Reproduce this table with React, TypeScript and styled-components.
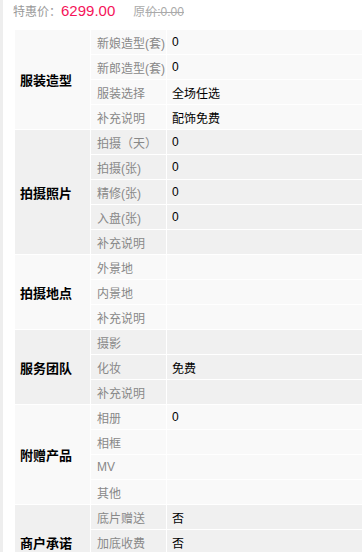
import styled, { createGlobalStyle } from "styled-components";

type Item = { label: string; value?: string };
type Group = { title: string; items: Item[] };

const groups: Group[] = [
  {
    title: "服装造型",
    items: [
      { label: "新娘造型(套)", value: "0" },
      { label: "新郎造型(套)", value: "0" },
      { label: "服装选择", value: "全场任选" },
      { label: "补充说明", value: "配饰免费" },
    ],
  },
  {
    title: "拍摄照片",
    items: [
      { label: "拍摄（天）", value: "0" },
      { label: "拍摄(张)", value: "0" },
      { label: "精修(张)", value: "0" },
      { label: "入盘(张)", value: "0" },
      { label: "补充说明" },
    ],
  },
  {
    title: "拍摄地点",
    items: [{ label: "外景地" }, { label: "内景地" }, { label: "补充说明" }],
  },
  {
    title: "服务团队",
    items: [{ label: "摄影" }, { label: "化妆", value: "免费" }, { label: "补充说明" }],
  },
  {
    title: "附赠产品",
    items: [{ label: "相册", value: "0" }, { label: "相框" }, { label: "MV" }, { label: "其他" }],
  },
  {
    title: "商户承诺",
    items: [
      { label: "底片赠送", value: "否" },
      { label: "加底收费", value: "否" },
      { label: "补充说明" },
    ],
  },
];

export default function App() {
  return (
    <>
      <GlobalStyle />
      <Page>
        <PriceBar>
          <PriceLabel>特惠价：</PriceLabel>
          <Price>6299.00</Price>
          <OldPrice>
            原<del>价:0.00</del>
          </OldPrice>
        </PriceBar>
        <Table>
          <tbody>
            {groups.map((g, gi) =>
              g.items.map((item, i) => (
                <Row key={`${gi}-${i}`} $alt={gi % 2 === 1}>
                  {i === 0 && <GroupCell rowSpan={g.items.length}>{g.title}</GroupCell>}
                  <LabelCell>{item.label}</LabelCell>
                  <ValueCell>{item.value ?? ""}</ValueCell>
                </Row>
              ))
            )}
          </tbody>
        </Table>
      </Page>
    </>
  );
}

const GlobalStyle = createGlobalStyle`
  body {
    margin: 0;
    background: #fff;
    font-family: "Liberation Sans", Arial, "Noto Sans CJK SC", sans-serif;
  }
`;

const Page = styled.div`
  border-left: 3px solid #eeeeee;
  padding-left: 12px;
  height: 552px;
  box-sizing: border-box;
  overflow: hidden;
`;

const PriceBar = styled.div`
  height: 29px;
  display: flex;
  align-items: center;
  padding-bottom: 8px;
  box-sizing: border-box;
  margin-left: -2px;
`;

const PriceLabel = styled.span`
  font-size: 12px;
  color: #999;
`;

const Price = styled.span`
  font-size: 15px;
  color: #f5145a;
  margin-right: 18px;
`;

const OldPrice = styled.span`
  font-size: 12px;
  color: #aaa;
  del {
    text-decoration: line-through;
  }
`;

const Table = styled.table`
  width: 400px;
  border-collapse: collapse;
  font-size: 12px;
  table-layout: fixed;
`;

const Row = styled.tr<{ $alt: boolean }>`
  background: ${(p) => (p.$alt ? "#f0f0f0" : "#f9f9f9")};
  td {
    height: 24px;
    padding: 0;
    border: 1px solid #fff;
  }
  td:first-child {
    border-left: none;
  }
`;

const GroupCell = styled.td`
  width: 70px;
  padding-left: 5px !important;
  font-weight: bold;
  color: #000;
  font-size: 13px;
  vertical-align: middle;
`;

const LabelCell = styled.td`
  width: 69px;
  padding-left: 6px !important;
  color: #888;
  white-space: nowrap;
`;

const ValueCell = styled.td`
  padding-left: 5px !important;
  color: #000;
`;
